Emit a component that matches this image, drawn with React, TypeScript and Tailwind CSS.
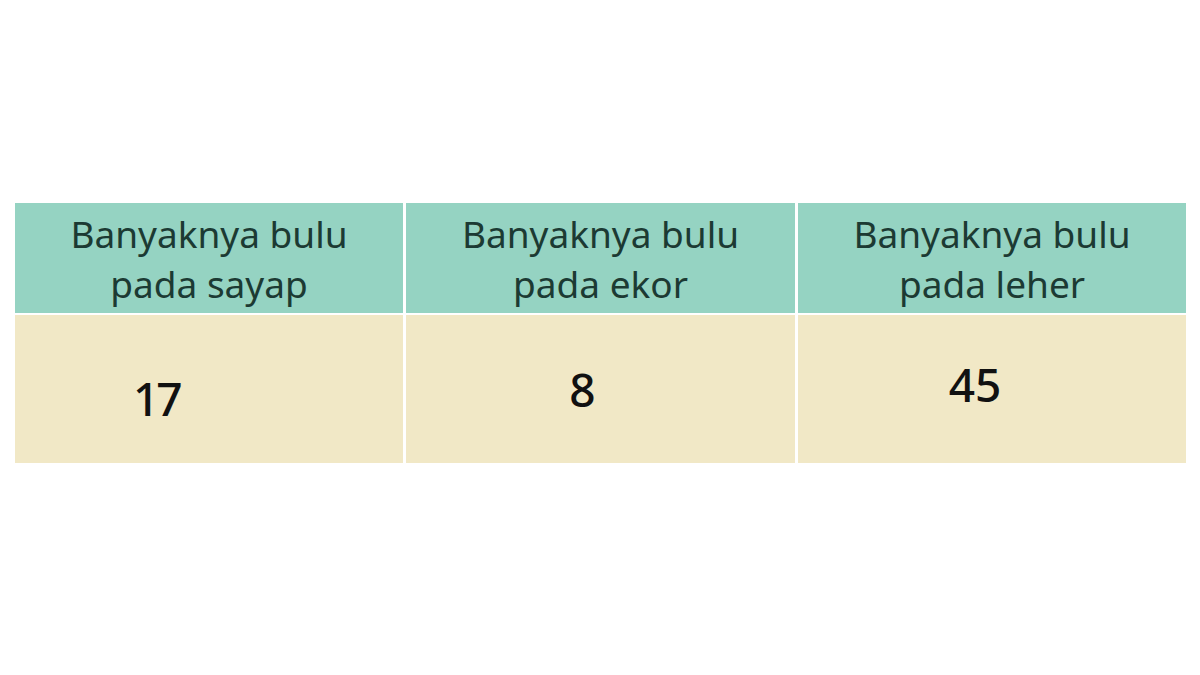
export default function App() {
  const headers = ["pada sayap", "pada ekor", "pada leher"];
  return (
    <div className="w-[1200px] h-[675px] bg-white pt-[203px] pl-[15px]" style={{ fontFamily: '"Noto Sans", sans-serif' }}>
      <div className="w-[1171px] grid grid-cols-[388px_389px_388px] gap-x-[3px] gap-y-[2px] bg-white">
        {headers.map((h) => (
          <div key={h} className="h-[110px] bg-[#95d3c2] text-[#1c3a33] text-[37px] leading-[50px] text-center pt-[6px]">
            <div>Banyaknya bulu</div>
            <div>{h}</div>
          </div>
        ))}
        <div className="h-[148px] bg-[#f1e8c6] flex items-center">
          <span className="ml-[118px] mt-[18px] text-[46px] font-medium text-[#111] tracking-[-3px]">17</span>
        </div>
        <div className="h-[148px] bg-[#f1e8c6] flex items-center justify-center">
          <span className="mr-[36px] text-[46px] font-medium text-[#111]">8</span>
        </div>
        <div className="h-[148px] bg-[#f1e8c6] flex items-center justify-center">
          <span className="mr-[34px] mb-[10px] text-[46px] font-medium text-[#111]">45</span>
        </div>
      </div>
    </div>
  );
}
